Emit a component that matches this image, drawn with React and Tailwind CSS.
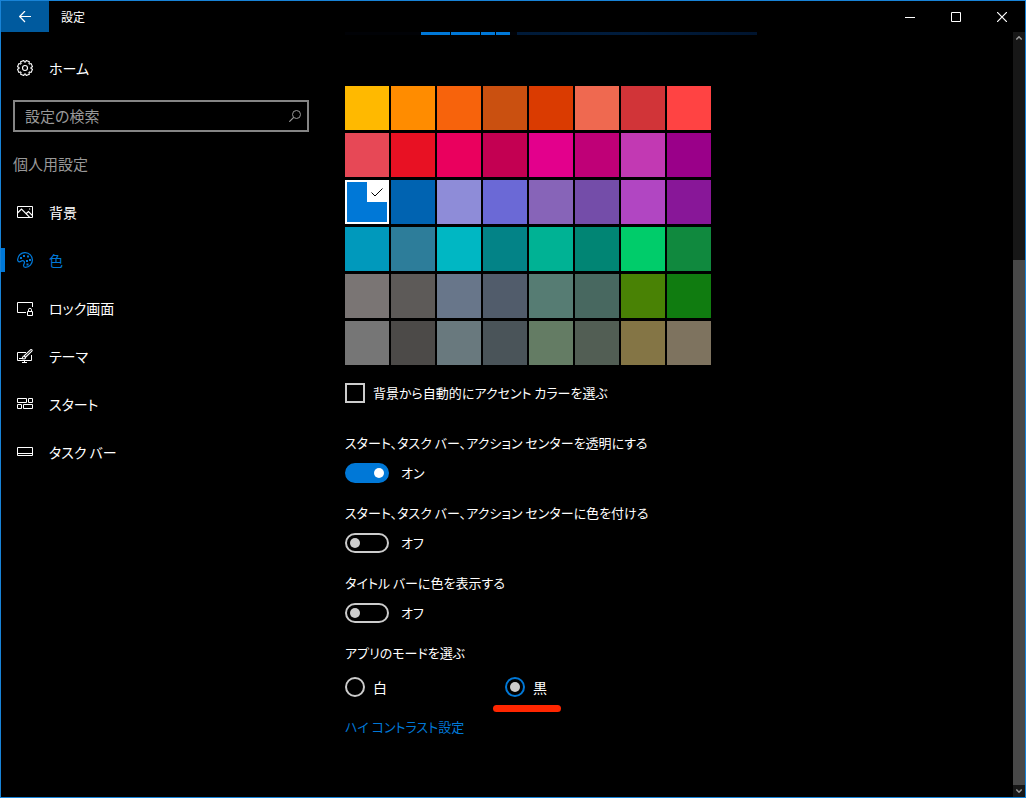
import React, { useState } from "react";

const ACCENT_COLORS = [
  "bg-[#ffb900]", "bg-[#ff8c00]", "bg-[#f7630c]", "bg-[#ca5010]", "bg-[#da3b01]", "bg-[#ef6950]", "bg-[#d13438]", "bg-[#ff4343]",
  "bg-[#e74856]", "bg-[#e81123]", "bg-[#ea005e]", "bg-[#c30052]", "bg-[#e3008c]", "bg-[#bf0077]", "bg-[#c239b3]", "bg-[#9a0089]",
  "bg-[#0078d7]", "bg-[#0063b1]", "bg-[#8e8cd8]", "bg-[#6b69d6]", "bg-[#8764b8]", "bg-[#744da9]", "bg-[#b146c2]", "bg-[#881798]",
  "bg-[#0099bc]", "bg-[#2d7d9a]", "bg-[#00b7c3]", "bg-[#038387]", "bg-[#00b294]", "bg-[#018574]", "bg-[#00cc6a]", "bg-[#10893e]",
  "bg-[#7a7574]", "bg-[#5d5a58]", "bg-[#68768a]", "bg-[#515c6b]", "bg-[#567c73]", "bg-[#486860]", "bg-[#498205]", "bg-[#107c10]",
  "bg-[#767676]", "bg-[#4c4a48]", "bg-[#69797e]", "bg-[#4a5459]", "bg-[#647c64]", "bg-[#525e54]", "bg-[#847545]", "bg-[#7e735f]",
];

const Icon = ({ children }) => (
  <svg viewBox="0 0 16 16" className="size-4 shrink-0" fill="none" stroke="currentColor" aria-hidden="true">
    {children}
  </svg>
);

// Outline of an eight-toothed gear, teeth between the axes
const gearPoints = Array.from({ length: 8 }, (_, i) => {
  const point = (offset, r) => {
    const a = ((i * 45 + 22.5 + offset) * Math.PI) / 180;
    return `${(8 + r * Math.cos(a)).toFixed(2)},${(8 + r * Math.sin(a)).toFixed(2)}`;
  };
  return [point(-18, 6), point(-13, 7.6), point(13, 7.6), point(18, 6)].join(" ");
}).join(" ");

const GearIcon = () => (
  <Icon>
    <g strokeWidth="1.1">
      <polygon points={gearPoints} strokeLinejoin="round" />
      <circle cx="8" cy="8" r="2.5" />
    </g>
  </Icon>
);

const PictureIcon = () => (
  <Icon>
    <path d="M.5 2.5h15v11H.5z" />
    <path d="M.5 9 4.5 5l8 8.2M9 9.700l2.500-2.200 4 4.200" strokeWidth="1.2" />
    <path d="M12 5h1.200" />
  </Icon>
);

const PaletteIcon = () => (
  <Icon>
    <path
      strokeWidth="1.2"
      d="M8.300.6A7.400 7.400 0 0 0 .6 7.600c0 1.500.9 2.200 1.900 2.200 1.400 0 1.600-1.200 3-1.200 1.200 0 2 .8 2 2 0 1.300-1 1.700-1 3 0 1.100.8 1.800 1.900 1.800A7.300 7.300 0 0 0 15.400 8 7.300 7.300 0 0 0 8.300.6z"
    />
    <g fill="currentColor" stroke="none">
      <path d="M3 5h2v2H3zM6 3h2v2H6zM10 3.500h2v2h-2zM12 7h2v2h-2zM9 8h2v2H9zM9.500 11.500h2v2h-2z" />
    </g>
  </Icon>
);

const LockScreenIcon = () => (
  <Icon>
    <path d="M9 12.500H.5v-10h15V7" />
    <path d="M10.500 11.500h5v4h-5zM11.500 11.500V9.800a1.500 1.500 0 0 1 3 0v1.700" />
  </Icon>
);

const ThemeIcon = () => (
  <Icon>
    <path d="M9 4.500H.5v8h14V7M7.500 12.500v2M5 14.500h5" />
    <path
      strokeWidth="1.1"
      d="M2 10.500h3c.6-.3.500-2.500 2-2.500l6.500-6.200c1-.8 2.200.3 1.300 1.300L8.500 9.300c.2 1.200-.8 2-2 1.500H5M7 8l1.500 1.400"
    />
  </Icon>
);

const StartIcon = () => (
  <Icon>
    <path d="M.5 2.500h9v4h-9zM11.500 2.500h4v4h-4zM.5 8.500h4v4h-4zM6.500 8.500h9v4h-9z" />
  </Icon>
);

const TaskbarIcon = () => (
  <Icon>
    <path d="M.5 3.500h15v8H.5zM.5 9.500h15" />
  </Icon>
);

const NAV_ITEMS = [
  { label: "背景", icon: PictureIcon },
  { label: "色", icon: PaletteIcon, active: true },
  { label: "ロック画面", icon: LockScreenIcon },
  { label: "テーマ", icon: ThemeIcon },
  { label: "スタート", icon: StartIcon },
  { label: "タスク バー", icon: TaskbarIcon },
];

const TitleBar = () => (
  <header className="flex h-[31px] shrink-0 items-stretch">
    <button aria-label="戻る" className="flex w-12 items-center justify-center bg-[#005a9e]">
      <svg viewBox="0 0 12 12" className="size-3" fill="none" stroke="currentColor" strokeWidth="1.2">
        <path d="M12 5.500H.800M6 0 .700 5.500 6 11" />
      </svg>
    </button>
    <h1 className="flex flex-1 items-center px-3 text-xs">設定</h1>
    <button aria-label="最小化" className="flex w-[46px] items-center justify-center">
      <svg viewBox="0 0 10 10" className="size-[10px]" fill="none" stroke="currentColor">
        <path d="M0 5.500h10" />
      </svg>
    </button>
    <button aria-label="最大化" className="flex w-[46px] items-center justify-center">
      <svg viewBox="0 0 10 10" className="size-[10px]" fill="none" stroke="currentColor">
        <path d="M.5.5h9v9h-9z" />
      </svg>
    </button>
    <button aria-label="閉じる" className="flex w-[46px] items-center justify-center">
      <svg viewBox="0 0 10 10" className="size-[10px]" fill="none" stroke="currentColor" strokeWidth="1.2">
        <path d="M0 0l10 10M10 0L0 10" />
      </svg>
    </button>
  </header>
);

const Sidebar = () => (
  <nav className="w-80 shrink-0 pt-3 text-sm">
    <a href="#home" className="flex h-12 items-center gap-4 pl-4">
      <GearIcon />
      ホーム
    </a>

    <div className="flex h-12 items-center px-3">
      <label className="flex h-8 flex-1 items-center border-2 border-[#858585] pr-[6px] pl-[10px] text-[15px] text-[#999999]">
        <input
          type="text"
          aria-label="設定の検索"
          placeholder="設定の検索"
          className="min-w-0 flex-1 bg-transparent outline-none placeholder:text-[#999999]"
        />
        <svg viewBox="0 0 12 12" className="size-3" fill="none" stroke="currentColor" aria-hidden="true">
          <circle cx="7.5" cy="4.5" r="4" />
          <path d="M4.700 7.300.3 11.700" strokeWidth="1.2" />
        </svg>
      </label>
    </div>

    <h2 className="flex h-12 items-center pl-3 text-[15px] text-[#999999]">個人用設定</h2>

    <ul>
      {NAV_ITEMS.map(({ label, icon: ItemIcon, active }) => (
        <li key={label}>
          <a
            href="#"
            aria-current={active ? "page" : undefined}
            className={active ? "flex h-12 items-center text-[#0078d7]" : "flex h-12 items-center"}
          >
            <span className={active ? "h-6 w-1 bg-[#0078d7]" : "h-6 w-1"} />
            <span className="flex items-center gap-4 pl-3">
              <ItemIcon />
              {label}
            </span>
          </a>
        </li>
      ))}
    </ul>
  </nav>
);

// Bottom edge of the preview, the rest is scrolled out of view
const PreviewEdge = () => (
  <div className="flex h-[3px] w-[412px] max-w-full">
    <div className="mr-px w-[75px] bg-[#010206]" />
    <div className="flex gap-px">
      <div className="w-[29px] bg-[#0078d7]" />
      <div className="w-[29px] bg-[#0078d7]" />
      <div className="w-[14px] bg-[#0078d7]" />
      <div className="w-[14px] bg-[#0078d7]" />
    </div>
    <div className="w-[7px] bg-[#010206]" />
    <div className="flex-1 bg-linear-to-r from-[#001a38] via-[#001c3d] to-[#00142e]" />
  </div>
);

const ColorGrid = () => {
  const [selected, setSelected] = useState(16);

  return (
    <div className="grid w-fit grid-cols-8 gap-x-[2px] gap-y-[3px]">
      {ACCENT_COLORS.map((color, i) => (
        <button
          key={color}
          aria-label={`アクセント カラー ${i + 1}`}
          aria-pressed={i === selected}
          onClick={() => setSelected(i)}
          className={`flex size-11 items-start justify-end ${color} ${i === selected ? "border-2 border-white" : ""}`}
        >
          {i === selected && (
            <span className="flex size-5 items-center justify-center bg-white text-black">
              <svg viewBox="0 0 12 9" className="h-[9px] w-3" fill="none" stroke="currentColor">
                <path d="M.5 4.500l3.500 3.500L11.500.5" />
              </svg>
            </span>
          )}
        </button>
      ))}
    </div>
  );
};

const Toggle = ({ id, label, defaultOn = false }) => {
  const [on, setOn] = useState(defaultOn);

  return (
    <div className="flex flex-col gap-[10px]">
      <label htmlFor={id}>{label}</label>
      <div className="flex items-center gap-3">
        <input
          id={id}
          type="checkbox"
          role="switch"
          checked={on}
          onChange={(e) => setOn(e.target.checked)}
          className="flex h-5 w-11 appearance-none items-center rounded-full border-2 border-[#cccccc] px-[3px] before:size-[10px] before:rounded-full before:bg-[#cccccc] checked:justify-end checked:border-[#0078d7] checked:bg-[#0078d7] checked:before:bg-white"
        />
        <span>{on ? "オン" : "オフ"}</span>
      </div>
    </div>
  );
};

const ModeRadio = ({ value, label, mode, setMode, marked }) => (
  <label className="relative flex w-40 items-center gap-2 text-sm leading-5">
    <input
      type="radio"
      name="app-mode"
      value={value}
      checked={mode === value}
      onChange={() => setMode(value)}
      className="flex size-5 appearance-none items-center justify-center rounded-full border-2 border-[#cccccc] checked:border-[#0078d7] checked:before:size-[10px] checked:before:rounded-full checked:before:bg-[#cccccc]"
    />
    {label}
    {marked && <span className="absolute top-7 -left-3 h-[7px] w-[68px] rounded-full bg-[#ff2600]" />}
  </label>
);

const ColorSettings = () => {
  const [mode, setMode] = useState("dark");

  return (
    <main className="min-w-0 flex-1 pb-12 pl-6 text-[13px] leading-5">
      <PreviewEdge />

      <div className="mt-[51px]">
        <ColorGrid />
      </div>

      <label className="mt-[18px] flex items-center gap-2">
        <input
          type="checkbox"
          className="size-5 appearance-none border-2 border-[#cccccc] checked:bg-[#0078d7]"
        />
        背景から自動的にアクセント カラーを選ぶ
      </label>

      <div className="mt-[30px] flex flex-col gap-5">
        <Toggle id="transparency" label="スタート、タスク バー、アクション センターを透明にする" defaultOn />
        <Toggle id="accent-start" label="スタート、タスク バー、アクション センターに色を付ける" />
        <Toggle id="accent-title" label="タイトル バーに色を表示する" />

        <fieldset>
          <legend>アプリのモードを選ぶ</legend>
          <div className="mt-[14px] flex">
            <ModeRadio value="light" label="白" mode={mode} setMode={setMode} />
            <ModeRadio value="dark" label="黒" mode={mode} setMode={setMode} marked />
          </div>
        </fieldset>

        <a href="#contrast" className="w-fit text-[#0078d7]">
          ハイ コントラスト設定
        </a>
      </div>
    </main>
  );
};

const ScrollBar = () => (
  <div className="flex w-3 shrink-0 flex-col bg-[#171717] text-[#999999]">
    <button aria-label="上へスクロール" className="flex size-3 items-center justify-center">
      <svg viewBox="0 0 6 4" className="h-1 w-[6px]" fill="none" stroke="currentColor" strokeWidth="1.5">
        <path d="M.3 3.500 3 .8l2.700 2.700" />
      </svg>
    </button>
    <div className="flex-[216]" />
    <div className="flex-[525] bg-[#484848]" />
    <button aria-label="下へスクロール" className="flex size-3 items-center justify-center">
      <svg viewBox="0 0 6 4" className="h-1 w-[6px]" fill="none" stroke="currentColor" strokeWidth="1.5">
        <path d="M.3.5 3 3.200 5.700.5" />
      </svg>
    </button>
  </div>
);

export default function App() {
  return (
    <div className="flex min-h-screen flex-col border border-[#1883d7] bg-black font-['Noto_Sans_CJK_JP',sans-serif] text-white [font-feature-settings:'palt']">
      <TitleBar />
      <div className="flex flex-1">
        <Sidebar />
        <ColorSettings />
        <ScrollBar />
      </div>
    </div>
  );
}
